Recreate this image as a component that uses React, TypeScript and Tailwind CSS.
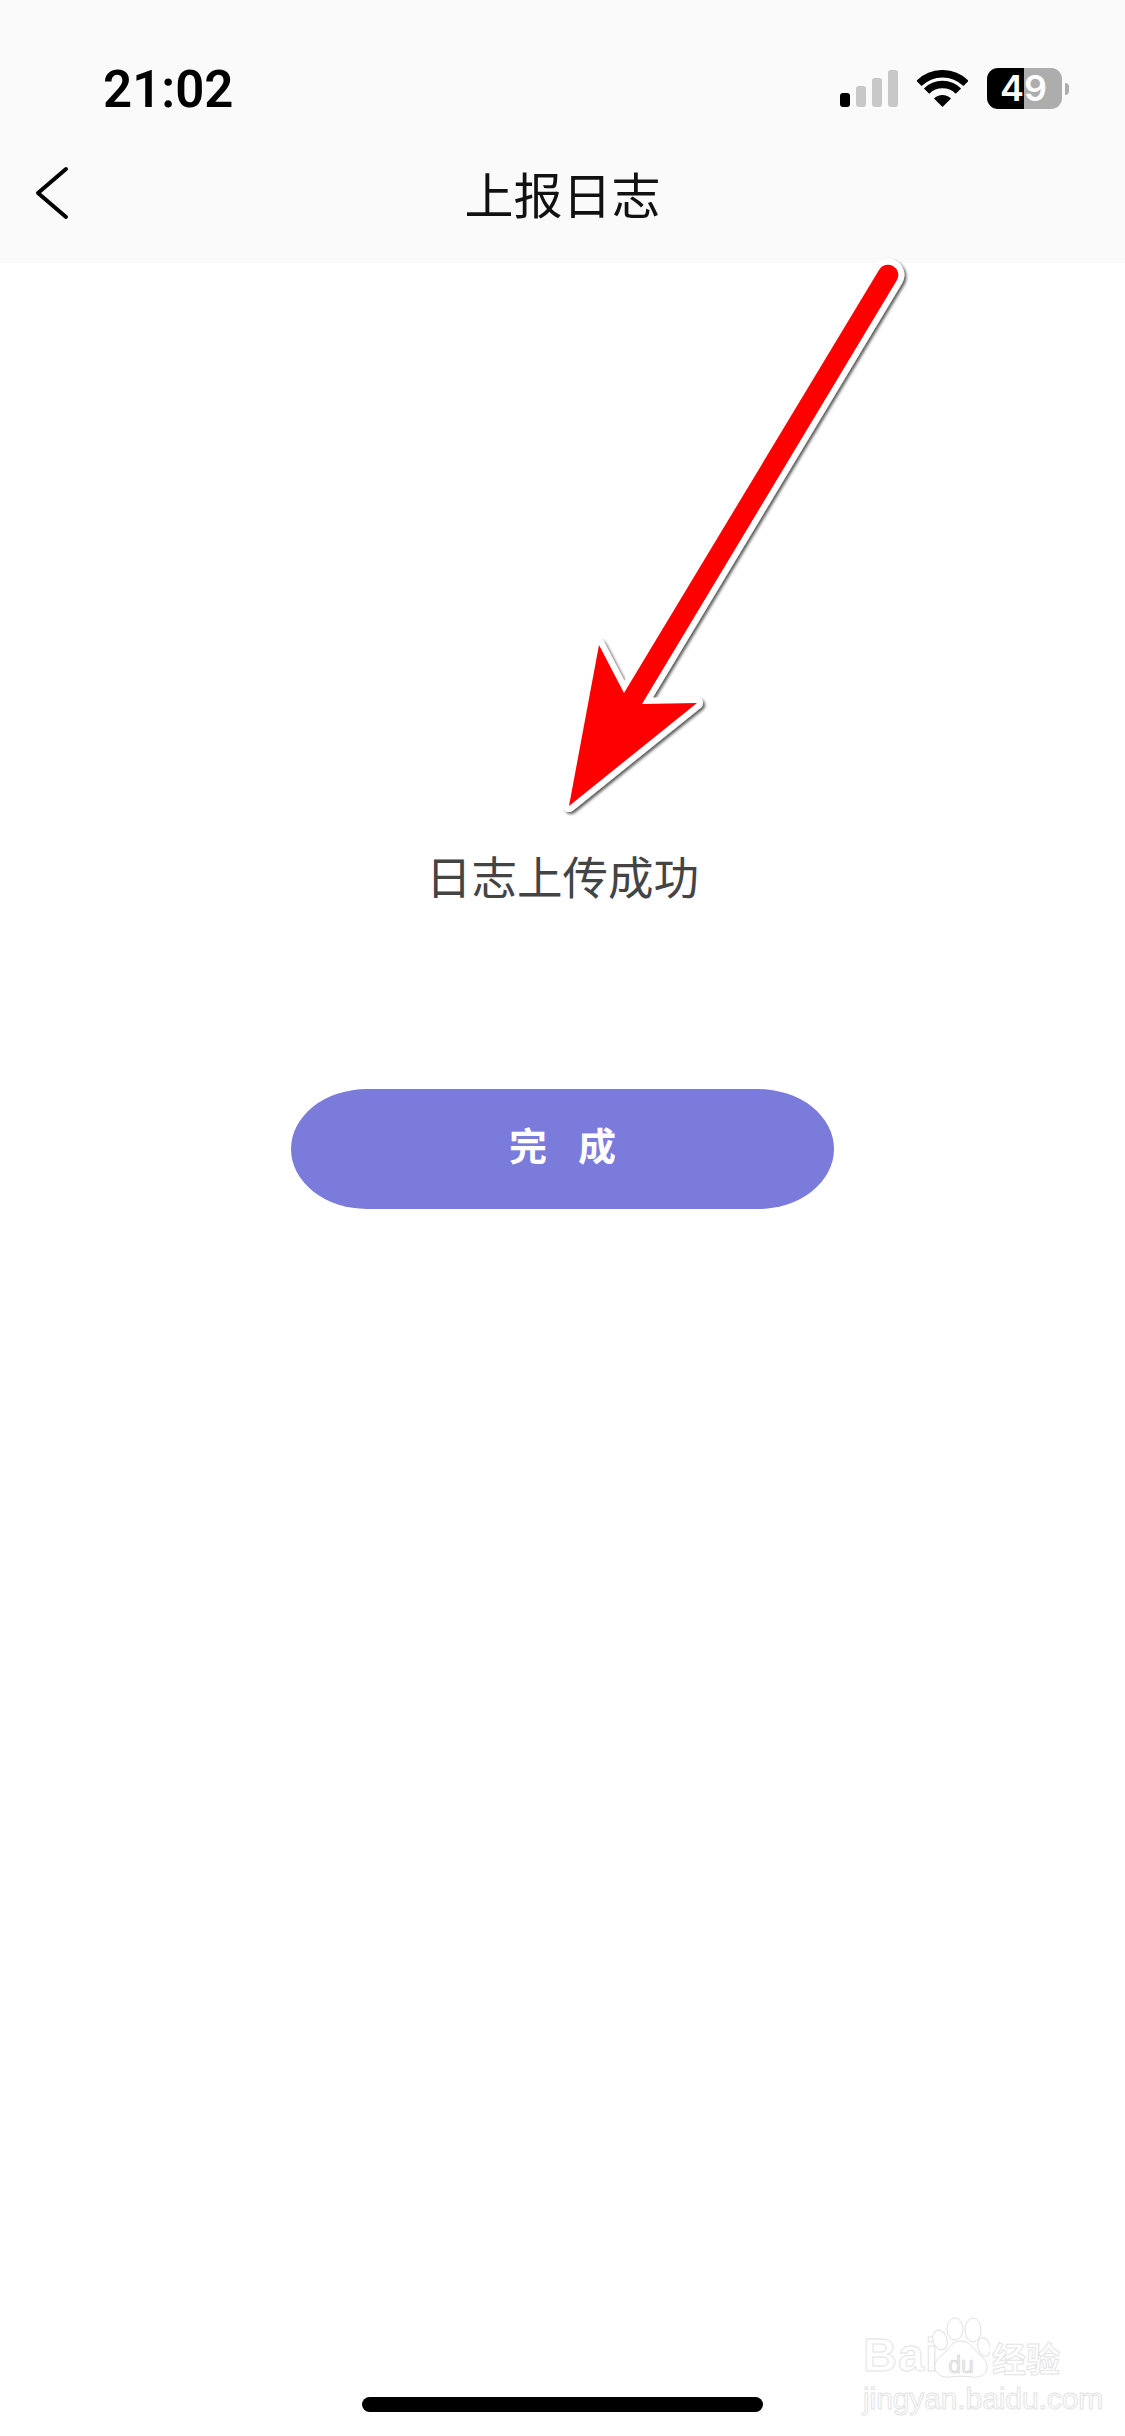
import React from 'react';

const cjk = "font-['Noto_Sans_CJK_SC','Noto_Sans',sans-serif]";

const StatusBar: React.FC = () => (
  <div className="flex items-start justify-between h-[166px] pl-[103px] pr-[56px] pt-[68px]">
    <span className="font-['Roboto',sans-serif] font-semibold text-[51px] leading-[44px] text-black">21:02</span>
    <div className="flex items-start">
      {/* signal */}
      <div className="flex items-end gap-[6px] h-[37px] mt-[2px]">
        <div className="w-[10px] h-[14px] rounded-[3px] bg-black" />
        <div className="w-[10px] h-[21px] rounded-[3px] bg-[#c8c8c8]" />
        <div className="w-[10px] h-[29px] rounded-[3px] bg-[#c8c8c8]" />
        <div className="w-[10px] h-[37px] rounded-[3px] bg-[#c8c8c8]" />
      </div>
      {/* wifi */}
      <svg width="51" height="37" viewBox="0 0 51 37" className="ml-[19px] mt-[2px]">
        <path d="M1.95 13.45A33.3 33.3 0 0 1 49.05 13.45" fill="none" stroke="#000" strokeWidth="7.4" />
        <path d="M9.6 21.1A22.5 22.5 0 0 1 41.4 21.1" fill="none" stroke="#000" strokeWidth="7.6" />
        <path d="M25.5 37L17 28.5A12 12 0 0 1 34 28.5Z" fill="#000" />
      </svg>
      {/* battery */}
      <div className="flex items-center ml-[19px]">
        <div className="flex w-[75px] h-[41px] text-white font-['Inter',sans-serif] font-semibold text-[36px] leading-[41px]">
          <div className="w-[37px] rounded-l-[11px] bg-black flex justify-end">4</div>
          <div className="w-[38px] rounded-r-[11px] bg-[#adadad] flex justify-start">9</div>
        </div>
        <div className="w-[4px] h-[12px] ml-[3px] rounded-r-full bg-[#adadad]" />
      </div>
    </div>
  </div>
);

const NavBar: React.FC = () => (
  <div className="relative flex items-center justify-center h-[97px] pb-[44px]">
    <svg width="34" height="54" viewBox="0 0 34 54" className="absolute left-[35px] top-0" fill="none" stroke="#000" strokeWidth="4" strokeLinecap="round" strokeLinejoin="round">
      <path d="M31 3L3 27L31 51" />
    </svg>
    <h1 className={`${cjk} font-normal text-[49px] leading-[56px] text-[#111]`}>上报日志</h1>
  </div>
);

// red annotation arrow pasted over the screenshot
const Arrow: React.FC = () => (
  <svg width="1125" height="900" viewBox="0 0 1125 900" className="absolute left-0 top-0 pointer-events-none">
    <defs>
      <filter id="arrowShadow" x="-10%" y="-10%" width="120%" height="120%">
        <feDropShadow dx="2" dy="2" stdDeviation="1.6" floodColor="#000" floodOpacity="0.65" />
      </filter>
    </defs>
    <path
      d="M879 270L624 693L599 645L569 806L697 703L642 704L897 280A10 10 0 0 0 879 270Z"
      fill="#ff0000"
      stroke="#fff"
      strokeWidth="12"
      strokeLinejoin="round"
      paintOrder="stroke"
      filter="url(#arrowShadow)"
    />
  </svg>
);

const Watermark: React.FC = () => (
  <div className="absolute left-[863px] top-[2317px] w-[200px] flex flex-col items-start text-white [-webkit-text-stroke:1px_#e4e4e4] font-['Liberation_Sans',sans-serif]">
    <div className="flex items-end h-[61px] whitespace-nowrap">
      <span className="text-[47px] leading-[46px] font-bold w-[69px] tracking-[1px]">Bai</span>
      <svg width="58" height="61" viewBox="0 0 58 61" fill="#fff" stroke="#e0e0e0" strokeWidth="1" className="shrink-0">
        <ellipse cx="8" cy="23" rx="7" ry="10" transform="rotate(-15 8 23)" />
        <ellipse cx="23" cy="12" rx="8" ry="11" />
        <ellipse cx="41" cy="13" rx="8" ry="12" />
        <ellipse cx="52" cy="30" rx="6" ry="9.5" transform="rotate(-15 52 30)" />
        <path d="M29 24C20 24 17 32 11 37C4 42 2 48 3 52C5 58 11 61 18 60C25 59 33 59 40 60C47 61 54 58 55 52C56 47 53 42 47 37C41 32 38 24 29 24Z" />
        <text x="29" y="56" textAnchor="middle" fontSize="23" fill="#ececec" stroke="#d4d4d4" strokeWidth="0.6" fontFamily="Liberation Sans, sans-serif">du</text>
      </svg>
      <span className={`${cjk} text-[34px] leading-[40px] font-bold ml-[2px]`}>经验</span>
    </div>
    <span className="text-[30px] leading-[30px] mt-[6px] whitespace-nowrap tracking-[-0.1px]">jingyan.baidu.com</span>
  </div>
);

const App: React.FC = () => {
  return (
    <div className="relative w-[1125px] h-[2436px] bg-white flex flex-col overflow-hidden">
      <header className="bg-[#fafafa]">
        <StatusBar />
        <NavBar />
      </header>

      <main className="flex-1 flex flex-col items-center pt-[582px]">
        <p className={`${cjk} text-[45.5px] leading-[60px] text-[#444]`}>日志上传成功</p>
        <button className={`${cjk} mt-[184px] w-[543px] h-[120px] rounded-[76px/60px] bg-[#7a7bdb] text-white text-[38px] font-bold tracking-[31px] pl-[31px] pb-[12px] flex items-center justify-center`}>
          完成
        </button>
      </main>

      <div className="flex justify-center pb-[24px]">
        <div className="w-[401px] h-[15px] rounded-full bg-black" />
      </div>

      <Arrow />
      <Watermark />
    </div>
  );
};

export default App;
